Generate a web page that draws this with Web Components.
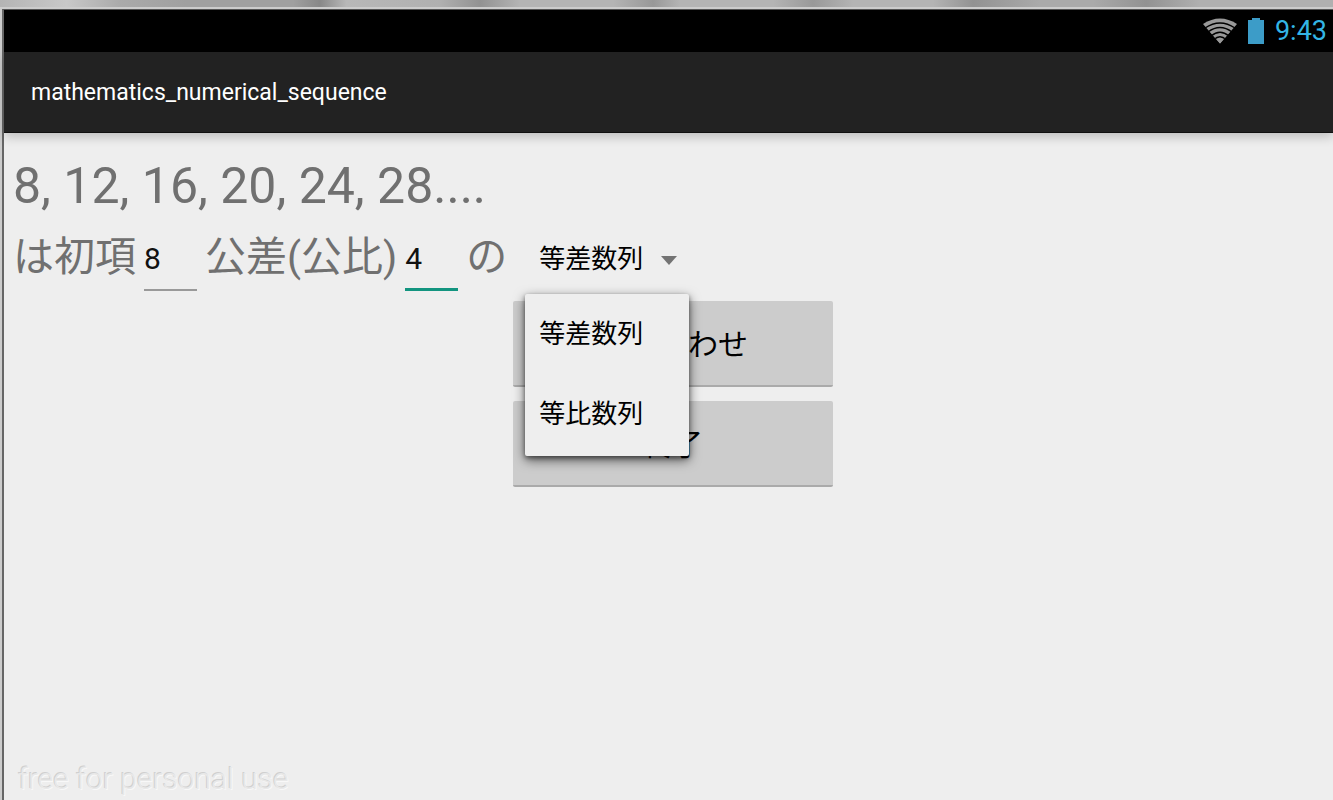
<!DOCTYPE html>
<html lang="ja">
<head>
<meta charset="utf-8">
<meta name="viewport" content="width=device-width, initial-scale=1">
<title>mathematics_numerical_sequence</title>
<style>
  html, body { height: 100%; margin: 0; }
  body {
    font-family: Roboto, "Noto Sans CJK JP", sans-serif;
    background: #ccc;
    overflow: hidden;
  }
</style>
</head>
<body>
<device-frame>
  <status-bar time="9:43"></status-bar>
  <app-bar>mathematics_numerical_sequence</app-bar>
  <sequence-quiz></sequence-quiz>
</device-frame>

<script>
const define = (name, html) => customElements.define(name, class extends HTMLElement {
  constructor() {
    super();
    const t = document.createElement('template');
    t.innerHTML = html;
    this.attachShadow({ mode: 'open' }).append(t.content.cloneNode(true));
  }
  connectedCallback() {
    for (const el of this.shadowRoot.querySelectorAll('[data-attr]')) {
      const value = this.getAttribute(el.dataset.attr);
      if (el.tagName === 'INPUT') el.value = value;
      else el.textContent = value;
    }
    const input = this.shadowRoot.querySelector('input');
    if (input) input.setAttribute('aria-label', this.getAttribute('label'));
  }
});

define('wifi-icon', `
  <style>:host { display: block; } svg { display: block; }</style>
  <svg width="34" height="26" viewBox="0 0 34 26" aria-hidden="true">
    <clipPath id="fan"><path d="M17 26 0 7V0h34v7z"/></clipPath>
    <g clip-path="url(#fan)">
      <path d="M17 26 0 6Q17-5 34 6z" fill="#999"/>
      <g fill="none" stroke="#000" stroke-width="1.4">
        <path d="M2 10Q17 0 32 10"/>
        <path d="M5 14Q17 5 29 14"/>
        <path d="M8 18Q17 10.500 26 18"/>
        <path d="M11 21.500Q17 16 23 21.500"/>
      </g>
    </g>
  </svg>`);

define('battery-icon', `
  <style>:host { display: block; } svg { display: block; }</style>
  <svg width="18" height="26" viewBox="0 0 18 26" aria-hidden="true">
    <path d="M5 0h8v2h4v24H1V2h4z" fill="#3c9cc8"/>
  </svg>`);

define('status-bar', `
  <style>
    :host {
      display: flex; justify-content: flex-end; align-items: center;
      height: 42px; padding-right: 6px; background: #000; color: #33b5e5;
      font-size: 27px; line-height: 42px;
    }
    wifi-icon, battery-icon { margin-right: 10px; }
  </style>
  <wifi-icon></wifi-icon><battery-icon></battery-icon><time data-attr="time"></time>`);

define('app-bar', `
  <style>
    :host {
      display: block; position: relative; padding: 2px 0 0 27px; background: #222; color: #fff;
      box-shadow: 0 4px 10px rgba(0,0,0,.2); border-bottom: 1px solid #111;
    }
    h1 { margin: 0; font-size: 23px; line-height: 78px; font-weight: 400; }
  </style>
  <h1><slot></slot></h1>`);

define('number-field', `
  <style>
    :host { display: block; width: 53px; --line: 2px solid #999; }
    :host([active]) { --line: 3px solid #12947f; }
    div { height: 60px; box-sizing: border-box; border-bottom: var(--line); }
    input {
      display: block; width: 100%; height: 56px; padding: 0; border: 0; outline: 0;
      background: none; color: #111; font: 30px/56px Roboto, sans-serif;
    }
  </style>
  <div><input type="text" inputmode="numeric" data-attr="value"></div>`);

define('kind-spinner', `
  <style>
    :host { display: block; position: relative; font-size: 26px; }
    select {
      display: block; appearance: none; width: 164px; height: 48px; padding: 0 0 0 14px;
      border: 0; outline: 0; background: none; color: #000;
      font: 26px/48px Roboto, "Noto Sans CJK JP", sans-serif;
    }
    svg { position: absolute; right: 11px; top: 21px; pointer-events: none; }
    ul {
      position: absolute; left: 0; top: 59px; width: 164px; margin: 0; padding: 0 0 2px;
      list-style: none; background: #eee; border-radius: 2px; z-index: 2;
      box-shadow: 0 4px 12px rgba(0,0,0,.6), 0 2px 4px rgba(0,0,0,.4);
    }
    button {
      display: block; width: 100%; height: 80px; padding: 0 14px; border: 0;
      background: none; color: #000; text-align: left;
      font: 26px/76px Roboto, "Noto Sans CJK JP", sans-serif;
    }
  </style>
  <select aria-label="数列の種類"><option>等差数列</option><option>等比数列</option></select>
  <svg width="18" height="10" viewBox="0 0 18 10" aria-hidden="true"><path d="M1 0h16L9 9z" fill="#737373"/></svg>
  <ul role="listbox" aria-label="数列の種類">
    <li role="presentation"><button type="button" role="option" aria-selected="true">等差数列</button></li>
    <li role="presentation"><button type="button" role="option" aria-selected="false">等比数列</button></li>
  </ul>`);

define('raised-button', `
  <style>
    :host { display: block; }
    button {
      display: block; width: 100%; height: 86px; padding: 4px 0 0; border: 0;
      border-bottom: 2px solid #aaa; border-radius: 2px; background: #ccc; color: #000;
      font: 30px/80px Roboto, "Noto Sans CJK JP", sans-serif;
    }
  </style>
  <button type="button"><slot></slot></button>`);

define('sequence-quiz', `
  <style>
    :host {
      display: flex; flex-direction: column; flex: 1; background: #eee; color: #707070;
      padding: 20px 0 0 9px;
    }
    .sequence { margin: 0; font-size: 50px; line-height: 66px; }
    .answer { display: flex; align-items: center; height: 76px; }
    .answer span { font-size: 41px; line-height: 60px; white-space: nowrap; }
    .common, .of, number-field { margin-left: 8px; }
    number-field { margin-top: 8px; }
    kind-spinner { margin: 4px 0 0 18px; }
    .actions { display: grid; gap: 14px; width: 320px; margin: 6px auto 0; }
    .notice {
      margin: auto 0 3px 5px; font-size: 30px; line-height: 36px; font-weight: 300;
      color: #e8e8e8; text-shadow: -1px -1px 0 #d0d0d0, 1px 1px 0 #f8f8f8;
    }
  </style>
  <p class="sequence">8, 12, 16, 20, 24, 28....</p>
  <div class="answer">
    <span>は初項</span>
    <number-field label="初項" value="8"></number-field>
    <span class="common">公差(公比)</span>
    <number-field active label="公差(公比)" value="4"></number-field>
    <span class="of">の</span>
    <kind-spinner></kind-spinner>
  </div>
  <div class="actions">
    <raised-button>答え合わせ</raised-button>
    <raised-button>終了</raised-button>
  </div>
  <p class="notice">free for personal use</p>`);

define('device-frame', `
  <style>
    :host {
      display: flex; flex-direction: column; height: 100vh; box-sizing: border-box;
      padding: 7px 0 0 2px;
      background: linear-gradient(90deg, #b4b4b4, #c8c8c8 5%, #aaa 9%, #a0a0a0 14%, #a0a0a0 22%, #888 24%, #b8b8b8 26%, #b0b0b0 33%, #929292 36%, #b4b4b4 39%, #b4b4b4 46%, #989898 49%, #b4b4b4 51%, #b4b4b4 58%, #999 61%, #b4b4b4 64%, #b4b4b4 70%, #929292 73%, #aaa 78%, #aaa 82%, #929292 86%, #b0b0b0 90%) 0 0 / 100% 7px no-repeat, #ccc;
    }
    main {
      display: flex; flex-direction: column; flex: 1; border-top: 1px solid #555;
      border-left: 2px solid #666; margin-top: 2px;
    }
  </style>
  <main><slot></slot></main>`);
</script>
</body>
</html>
